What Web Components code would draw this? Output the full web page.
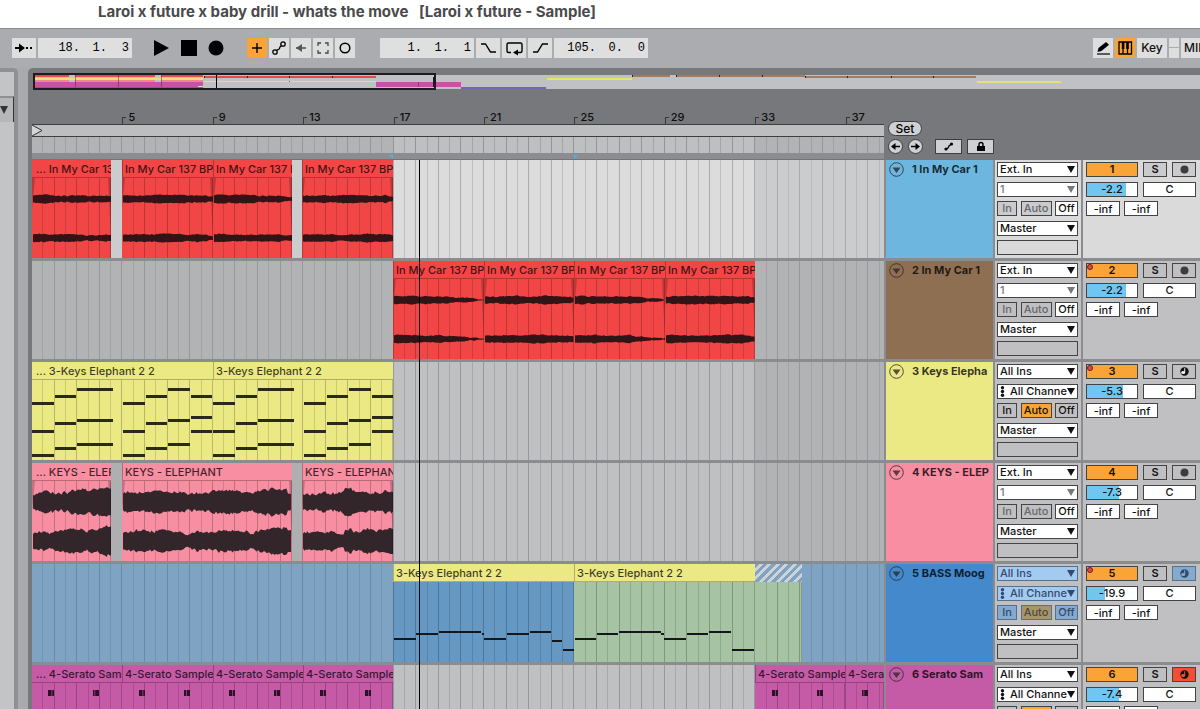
<!DOCTYPE html>
<html lang="en">
<head>
<meta charset="utf-8">
<title>Laroi x future x baby drill - whats the move</title>
<style>
html, body { margin: 0; height: 100%; overflow: hidden; background: #a9aaad; }
body { font: 500 11px/14px Inter, "Liberation Sans", sans-serif; color: #111; }
</style>
</head>
<body>
<daw-app></daw-app>
<script>
const BAR = 22.6;      // lane units per bar
const LANE = 852;      // lane units across the visible arrangement

const BASE = `
*, *::before { box-sizing: border-box; }
button, input, select { font: inherit; color: inherit; margin: 0; padding: 0; border: 0; border-radius: 0; appearance: none; outline: 0; min-width: 0; }
svg { display: block; }
`;

function define(name, css, render) {
  customElements.define(name, class extends HTMLElement {
    connectedCallback() {
      if (this.shadowRoot) return;
      const root = this.attachShadow({ mode: "open" });
      root.innerHTML = `<style>${BASE}${css}</style>${render(this)}`;
    }
  });
}

function gridLines(from, to, height, colour) {
  let s = "";
  for (let i = Math.ceil(from / (BAR / 2) + 0.05); i * BAR / 2 < to - 1; i++) {
    const x = Math.round(i * BAR / 2) - 1;
    s += `<rect x="${x}" width="1" height="${height}" fill="${colour}" opacity="${i % 2 ? 0.6 : 1}"/>`;
  }
  return s;
}

/* Deterministic waveform outline: an envelope with a little noise on both sides. */
function wave(from, to, centre, env, noise, seed) {
  let r = seed;
  const rnd = () => (r = (r * 16807) % 2147483647) / 2147483647;
  const top = [], bottom = [];
  let drift = 0;
  for (let x = from; x <= to; x += 1.5) {
    const t = (x - from) / (to - from);
    drift = drift * 0.7 + (rnd() - 0.5) * noise;
    const a = env(t, x - from) + drift;
    top.push(`${x.toFixed(1)} ${(centre - a - rnd() * noise * 0.4).toFixed(1)}`);
    bottom.unshift(`${x.toFixed(1)} ${(centre + a + rnd() * noise * 0.4).toFixed(1)}`);
  }
  return `<path d="M${top.join("L")}L${bottom.join("L")}Z"/>`;
}

const ENV = {
  fade: (t, x) => 4 - x / 90 * 1.8,
  tail: (t, x) => (t < 0.6 ? 4 - t * 1.7 : 3 * (1 - t) / 0.4 + 0.2),
  full: (t, x) => 3.6 - (t > 0.92 ? (t - 0.92) * 20 : 0),
  keysA: t => 8 + t * 4.5,
  keysB: t => 9 + Math.sin(t * 14) * 1 + (t > 0.78 ? 3 : 0) - (t > 0.97 ? 4 : 0),
  keysC: t => 8.5 + t * 2 + (Math.abs(t - 0.5) < 0.04 ? 3 : 0)
};

const chordsA = [[0,22,22],[0,22,50],[0,22,74],[23,21,15],[23,21,42],[23,21,67],[45,36,8],[45,36,39],[45,36,63]];
const chordsB = [[0,22,22],[0,22,50],[0,22,74],[23,21,15],[23,21,42],[23,21,67],[45,22,8],[45,22,39],[45,22,63],[68,21,15],[68,21,36],[68,21,50]];
const shift = (notes, dx) => notes.map(([x, w, y]) => [x + dx, w, y]);
const keys = at => [...shift(chordsA, at), ...shift(chordsB, at + 91)];
const blocks = xs => xs.flatMap(([x, split]) => [[x, split, 7, 6], [x + split + 0.6, 5.4 - split, 7, 6]]);

const CAR = "In My Car 137 BPM", KEYS = "3-Keys Elephant 2 2", SER = "4-Serato Sample";
const RED = "#f24546", YEL = "#ebe984", PINK = "#f78ea2", MAG = "#c55aa7";

const TRACKS = [
  { n: 1, name: "1 In My Car 1", colour: "#6db6df", vol: -2.2, fill: 79, input: "ext", selected: true, arm: "dot", items: [
    { w: 79, t: "... " + CAR, c: RED, env: "fade" }, { w: 11, blank: "#cbccce" },
    { w: 91, t: CAR, c: RED, env: "full" }, { w: 79, t: CAR, c: RED, env: "fade" }, { w: 10, blank: "#cbccce" },
    { w: 91, t: CAR, c: RED, env: "full" }, { w: 491 } ] },
  { n: 2, name: "2 In My Car 1", colour: "#8f6f52", vol: -2.2, fill: 79, input: "ext", arm: "dot", auto: true, items: [
    { w: 361 }, { w: 91, t: CAR, c: RED, env: "tail", mark: true }, { w: 90, t: CAR, c: RED, env: "full" },
    { w: 91, t: CAR, c: RED, env: "tail" }, { w: 90, t: CAR, c: RED, env: "full" }, { w: 129 } ] },
  { n: 3, name: "3 Keys Elepha", colour: YEL, vol: -5.3, fill: 72, input: "midi", arm: "midi", auto: true, items: [
    { w: 181, t: "... " + KEYS, c: YEL, notes: keys(0) }, { w: 180, t: KEYS, c: YEL, notes: keys(181) }, { w: 491 } ] },
  { n: 4, name: "4 KEYS - ELEP", colour: PINK, vol: -7.3, fill: 65, input: "ext", arm: "dot", items: [
    { w: 79, t: "... KEYS - ELEPHANT", c: PINK, env: "keysA" }, { w: 11, blank: "#adafb1" },
    { w: 170, t: "KEYS - ELEPHANT", c: PINK, env: "keysB" }, { w: 10, blank: "#adafb1" },
    { w: 91, t: "KEYS - ELEPHANT", c: PINK, env: "keysC" }, { w: 491 } ] },
  { n: 5, name: "5 BASS Moog", colour: "#4489cb", vol: -19.9, fill: 37, input: "midi", tinted: true, arm: "midi", auto: true, items: [
    { w: 361 },
    { w: 181, t: KEYS, c: YEL, body: "#6598c3", thin: true, notes: [[1,22,56],[23,22,51],[46,42,49],[89,2,51],[91,22,56],[114,22,51],[137,21,49],[159,10,58],[170,11,67]].map(([x,w,y]) => [x + 361, w, y]) },
    { w: 181, t: KEYS, c: YEL, body: "#a6c3a4", thin: true, notes: [[1,21,56],[23,21,51],[45,42,49],[87,3,51],[90,22,56],[113,21,51],[135,22,49],[158,22,67]].map(([x,w,y]) => [x + 542, w, y]) },
    { w: 47, t: "", hatch: true, body: "#a6c3a4" }, { w: 82 } ] },
  { n: 6, name: "6 Serato Sam", colour: MAG, vol: -7.4, fill: 65, input: "midi", arm: "on", items: [
    { w: 90, t: "... " + SER, c: MAG, notes: blocks([[16, 3.6], [61, 1.6]]) }, { w: 91, t: SER, c: MAG, notes: blocks([[107, 3.6], [152, 2.4]]) },
    { w: 90, t: SER, c: MAG, notes: blocks([[197, 3], [242, 2.4]]) }, { w: 90, t: SER, c: MAG, notes: blocks([[288, 3], [333, 3]]) },
    { w: 362 }, { w: 90, t: SER, c: MAG, notes: blocks([[740, 3], [785, 2.4]]) }, { w: 39, t: SER, c: MAG, notes: blocks([[830, 1.6]]) } ] }
];

/* ---- title and toolbar ---- */
define("title-bar", `
:host { display: flex; height: 28px; flex: none; background: #fff; padding: 0 0 0 98px; }
h1 { margin: 0; font: 700 15px/23px Inter, sans-serif; color: #4a4a4c; white-space: pre; }
`, () => `<h1><slot></slot></h1>`);

define("position-field", `
:host { display: flex; width: 94px; height: 20px; background: #dfdfe0; padding: 0 3px 0 0; }
input { font: 12px/20px "Liberation Mono", monospace; background: none; text-align: right; color: #000; width: 27px; height: 20px; }
input:first-of-type { width: 42px; }
input:last-of-type { width: 22px; }
`, el => el.getAttribute("value").split(" ").map((v, i) =>
  `<input aria-label="${el.getAttribute("label")} ${i + 1}" value="${v}">`).join(""));

const ICONS = {
  follow: `<svg width="24" height="20"><path d="M3 10h7" stroke="#000" stroke-width="2"/><path d="M7 5.500 13 10l-6 4.500z"/><path d="M14 9h2v2h-2zM18 9h2v2h-2z"/></svg>`,
  play: `<svg width="16" height="20"><path d="M0 2 15 10 0 18z"/></svg>`,
  stop: `<svg width="16" height="20"><path d="M0 2h16v16H0z"/></svg>`,
  record: `<svg width="16" height="20"><circle cx="8" cy="10" r="7.500"/></svg>`,
  plus: `<svg width="20" height="20"><path d="M5 10h10M10 5v10" stroke="#000" stroke-width="1.400"/></svg>`,
  automation: `<svg width="20" height="20" fill="none" stroke="#000" stroke-width="1.300"><circle cx="6" cy="14" r="2.200"/><circle cx="14" cy="6" r="2.200"/><path d="M7.500 12.500c2-2 2.500-.5 3-2s0-1.500 2-3"/></svg>`,
  back: `<svg width="20" height="20"><path d="M5 10h10" stroke="#555" stroke-width="1.600"/><path d="M11 6 5 10l6 4z" fill="#555"/></svg>`,
  capture: `<svg width="20" height="20" fill="none" stroke="#444" stroke-width="1.300"><path d="M5 8V5h3M12 5h3v3M15 12v3h-3M8 15H5v-3"/></svg>`,
  ring: `<svg width="20" height="20"><circle cx="10" cy="10" r="4.800" fill="none" stroke="#000" stroke-width="1.500"/></svg>`,
  punchin: `<svg width="24" height="20" fill="none" stroke="#000" stroke-width="1.400"><path d="M5 6h4.500l5 8H20"/></svg>`,
  loop: `<svg width="24" height="20"><path d="M9 14.500H6.500Q5 14.500 5 13V6.500Q5 5 6.500 5h12Q20 5 20 6.500V13q0 1.500-1.500 1.500H15" fill="none" stroke="#000" stroke-width="1.400"/><path d="M11 14.500l5-3v6z"/></svg>`,
  punchout: `<svg width="24" height="20" fill="none" stroke="#000" stroke-width="1.400"><path d="M5 14h4.500l5-8H20"/></svg>`,
  pencil: `<svg width="20" height="20"><path d="M4 16h13" stroke="#000" stroke-width="1.200"/><path d="M4.500 14l1-4 7.500-6 3 2.800-7.500 6.200z"/></svg>`,
  piano: `<svg width="20" height="20"><path d="M4 4h12.500v12H4zM8 4v12M12.500 4v12" fill="none" stroke="#000" stroke-width="1.300"/><path d="M6.800 4h2.600v7H6.800zM11.200 4h2.600v7h-2.600z"/></svg>`
};

define("tool-bar", `
:host { display: flex; flex: none; height: 40px; align-items: center; padding: 0 0 2px 12px; background: #abacaf; border-top: 1px solid #8c8d8f; overflow: hidden; }
.group { display: flex; gap: 2px; flex: none; }
.transport { gap: 11px; margin: 0 23px 0 22px; }
.song { margin-left: 25px; }
.right { margin-left: auto; width: 107px; overflow: hidden; }
button { width: 20px; height: 20px; flex: none; background: #dedede; font-size: 12px; line-height: 20px; color: #111; }
.wide { width: 24px; }
.transport button { width: 16px; background: none; }
.on { background: #faa438; }
.key { width: 30px; }
.midi { width: 42px; padding-left: 3px; text-align: left; }
.leds { display: grid; gap: 1px; width: 10px; flex: none; }
.leds i { background: #dedede; }
`, () => `
<div class="group"><button class="wide" aria-label="Follow">${ICONS.follow}</button><position-field label="Position" value="18. 1. 3"></position-field></div>
<div class="group transport"><button aria-label="Play">${ICONS.play}</button><button aria-label="Stop">${ICONS.stop}</button><button aria-label="Record">${ICONS.record}</button></div>
<div class="group"><button class="on" aria-label="Overdub">${ICONS.plus}</button><button aria-label="Automation arm">${ICONS.automation}</button><button aria-label="Re-enable automation">${ICONS.back}</button><button aria-label="Capture">${ICONS.capture}</button><button aria-label="Session record">${ICONS.ring}</button></div>
<div class="group song"><position-field label="Loop start" value="1. 1. 1"></position-field><button class="wide" aria-label="Punch in">${ICONS.punchin}</button><button class="wide" aria-label="Loop">${ICONS.loop}</button><button class="wide" aria-label="Punch out">${ICONS.punchout}</button><position-field label="Loop length" value="105. 0. 0"></position-field></div>
<div class="group right"><button aria-label="Draw">${ICONS.pencil}</button><button class="on" aria-label="Computer keyboard">${ICONS.piano}</button><button class="key">Key</button><span class="leds"><i></i><i></i></span><button class="midi">MIDI</button></div>`);

/* ---- browser edge ---- */
define("side-edge", `
:host { display: flex; flex-direction: column; flex: none; width: 18px; margin-right: 10px; border: solid #8f9093; border-width: 4px 4px 0 0; border-radius: 0 5px 0 0; background: #c3c4c5; }
button { height: 26px; margin-top: 24px; background: #b6b7b9; border: solid #8f9093; border-width: 2px 0 0; border-right: 1px solid #333; }
`, () => `<button aria-label="Collapse"><svg width="13" height="24"><path d="M0 8h8l-4 8z" fill="#333"/></svg></button>`);

/* ---- overview ---- */
define("song-overview", `
:host { display: block; height: 18px; }
svg { width: 100%; height: 18px; }
`, () => {
  const r = (x, x2, y, h, c) => `<rect x="${x - 32}" y="${y}" width="${x2 - x}" height="${h}" fill="${c}"/>`;
  const red = "#e8484c", mag = "#c852a8", dark = "#33211c", brown = "#a07c64";
  return `<svg viewBox="0 0 1168 18" preserveAspectRatio="none" role="img" aria-label="Overview" shape-rendering="crispEdges">
  ${r(33, 1200, 2, 14, "#c0c1c3")}
  ${r(35, 69, 2, 2, red)}${r(75, 155, 2, 2, red)}${r(161, 203, 2, 2, red)}
  ${r(35, 203, 4, 1, "#d8c4b4")}${r(35, 203, 5, 2, "#e6e07c")}${r(35, 203, 7, 2, "#f0868f")}${r(69, 75, 7, 2, "#c0c1c3")}${r(155, 161, 7, 2, "#c0c1c3")}
  ${r(35, 203, 9, 5, mag)}${r(35, 203, 14, 1, "#6c63ae")}${r(198, 203, 13, 1, "#ddd")}
  ${[75, 118, 161].map(x => r(x, x + 1, 2, 12, "rgba(90,30,60,.5)")).join("")}
  ${r(204, 376, 3, 2, red)}${[204, 247, 289, 332].map(x => r(x, x + 1, 3, 2, dark)).join("")}${r(204, 376, 8, 1, "#e6e07c")}${r(289, 290, 8, 1, "#666655")}
  ${r(376, 461, 9, 5, mag)}${r(418, 419, 9, 5, "#a03888")}${r(461, 546, 14, 2, "#6f68ae")}
  ${r(547, 632, 5, 2, "#e9e263")}${r(632, 670, 2, 2, brown)}${r(676, 805, 2, 2, brown)}${r(805, 976, 3, 2, brown)}
  ${[632, 676, 719, 762].map(x => r(x, x + 1, 2, 2, dark)).join("")}${[805, 847, 891, 933].map(x => r(x, x + 1, 3, 2, dark)).join("")}
  ${r(977, 1061, 8, 2, "#e6e07c")}
  ${r(216, 217, 1, 16, "#000")}
  <rect x="2" y="1" width="401" height="15" fill="none" stroke="#1c1c1e" stroke-width="2"/>${r(433, 435, 4, 10, "#1c1c1e")}
  </svg>`;
});

/* ---- ruler ---- */
define("time-ruler", `
:host { display: flex; height: 69px; }
.time { flex: 1; min-width: 0; display: flex; flex-direction: column; }
.labels { display: flex; height: 33px; align-items: flex-end; background: #77787b; overflow: hidden; }
.labels span { flex: 904 0 0; min-width: 0; display: flex; align-items: flex-end; gap: 2px; line-height: 14px; color: #0d0d0e; }
.labels span:last-child { flex-grow: 384; }
.labels i { width: 4px; height: 7px; border: solid #37383a; border-width: 1px 0 0 1px; }
.loop { height: 13px; background: #bdbec0; border: solid #3d3e40; border-width: 1px 0; }
.scrub { height: 16px; }
.scrub svg { width: 100%; height: 16px; }
.gap { height: 7px; background: #8c8d90; border-bottom: 1px solid #7d6f74; }
.gap svg { width: 100%; height: 6px; }
.side { flex: none; width: 316px; padding: 0 0 6px 4px; display: flex; flex-direction: column; justify-content: flex-end; gap: 3px; }
.row { display: flex; gap: 5px; }
button { background: #cfd0d1; border: 1px solid #3c3d3f; height: 15px; line-height: 12px; font-size: 12px; display: grid; place-items: center; color: #000; }
.set { width: 34px; border-radius: 8px; }
.round { width: 15px; border-radius: 8px; }
.sq { width: 27px; }
.sq.first { margin-left: 7px; }
`, () => {
  const labels = ["", 5, 9, 13, 17, 21, 25, 29, 33, 37];
  return `<div class="time">
  <div class="labels">${labels.map(l => `<span>${l ? `<i></i>${l}` : ""}</span>`).join("")}</div>
  <div class="loop"><svg width="12" height="11"><path d="M0 0l10 5.500L0 11" fill="#d5d5d6" stroke="#333"/></svg></div>
  <div class="scrub"><svg viewBox="0 0 ${LANE} 16" preserveAspectRatio="none" shape-rendering="crispEdges"><rect width="${LANE}" height="16" fill="#b2b3b5"/><rect x="361" width="362" height="16" fill="#bebfc0"/>${gridLines(0, LANE, 16, "#939598")}</svg></div>
  <div class="gap"><svg viewBox="0 0 ${LANE} 6" preserveAspectRatio="none" fill="#45b4ea"><path d="M357 2h4v4zM542 2h4l-4 4z"/></svg></div>
  </div>
  <div class="side"><div class="row"><button class="set">Set</button></div>
  <div class="row"><button class="round" aria-label="Previous locator"><svg width="13" height="13"><path d="M5 6.500h6" stroke="#000" stroke-width="1.600"/><path d="M6.500 3 2 6.500 6.500 10z"/></svg></button>
  <button class="round" aria-label="Next locator"><svg width="13" height="13"><path d="M2 6.500h6" stroke="#000" stroke-width="1.600"/><path d="M6.500 3 11 6.500 6.500 10z"/></svg></button>
  <button class="sq first" aria-label="Automation mode"><svg width="13" height="13"><circle cx="4" cy="9" r="1.600"/><circle cx="9.500" cy="4" r="1.600"/><path d="M4 9l2-1 1-2 2.500-2" fill="none" stroke="#000" stroke-width="1.300"/></svg></button>
  <button class="sq" aria-label="Lock envelopes"><svg width="13" height="13"><path d="M3 6h8v5H3z"/><path d="M5 6V4.500a2 2 0 0 1 4 0V6" fill="none" stroke="#000" stroke-width="1.400"/></svg></button></div></div>`;
});

/* ---- clips ---- */
define("track-clip", `
:host { display: flex; flex-direction: column; min-width: 0; overflow: hidden; }
header { flex: none; height: 18px; padding: 2px 0 0 3px; font-weight: 500; line-height: 15px; white-space: nowrap; overflow: hidden; color: rgba(0,0,0,.75); border: solid rgba(0,0,0,.25); border-width: 0 0 1px; background: var(--c); }
:host([edge]) header { border-left-width: 1px; padding-left: 2px; }
.dots { padding-left: 4px; }
header.hatch { border: 0; background: repeating-linear-gradient(135deg, #7fa3c3 0 3px, #cfd3d6 3px 6px); }
svg { width: 100%; height: 80px; flex: none; background: var(--b); }
`, el => {
  const d = el.item, s = el.start, e = s + d.w;
  let art = gridLines(s, e, 80, "rgba(0,0,0,.22)");
  if (d.env) {
    const big = d.env.startsWith("keys");
    art += `<path d="M${s} 0h3L${s} 30zM${e} 0h-3L${e} 60z" fill="rgba(0,0,0,.2)" shape-rendering="auto"/>`;
    art += `<g fill="${big ? "#33262a" : "#301416"}" shape-rendering="auto">${[21, 60].map((c, i) => wave(s + 1, e, c, ENV[d.env], big ? 3 : 1, 977 + s * 31 + i * 5555)).join("")}</g>`;
  }
  if (d.mark) art += `<path d="M387 16h1v10h-1zM387 55h1v10h-1z" fill="#fff"/>`;
  for (const [x, w, y, h] of d.notes || [])
    art += `<rect x="${x}" y="${y}" width="${w}" height="${h || (d.thin ? 2 : 3)}" fill="${h ? "#2b1226" : d.thin ? "#14171a" : "#2a2a1a"}" ${h ? 'shape-rendering="auto"' : ""}/>`;
  art += `<rect x="${e - 1}" width="1" height="80" fill="rgba(0,0,0,.2)"/>`;
  return `<style>:host{--c:${d.c};--b:${d.body || d.c}}</style>
  <header class="${d.hatch ? "hatch" : d.t.startsWith("...") ? "dots" : ""}">${d.t}</header>
  <svg viewBox="${s} 0 ${d.w} 80" preserveAspectRatio="none" shape-rendering="crispEdges">${art}</svg>`;
});

define("clip-lane", `
:host { display: grid; min-width: 0; overflow: hidden; }
.grid, .clips { grid-area: 1 / 1; min-width: 0; }
.grid { width: 100%; height: 98px; }
.clips { display: flex; height: 98px; }
`, () => "");
customElements.get("clip-lane").prototype.fill = function (t) {
  const root = this.shadowRoot;
  const base = t.selected ? ["#cbccce", "#dcdcdd"] : t.tinted ? ["#7fa3c3", "#7fa3c3"] : ["#b1b3b5", "#bfc0c2"];
  const line = t.tinted ? "#6a89a5" : t.selected ? "#a9abae" : "#95989c";
  root.innerHTML += `<svg class="grid" viewBox="0 0 ${LANE} 98" preserveAspectRatio="none" shape-rendering="crispEdges">
    <rect width="${LANE}" height="98" fill="${base[0]}"/><rect x="361" width="362" height="98" fill="${base[1]}"/>${gridLines(0, LANE, 98, line)}</svg><div class="clips"></div>`;
  const clips = root.querySelector(".clips");
  let x = 0;
  for (const it of t.items) {
    const node = document.createElement(it.t === undefined ? "div" : "track-clip");
    node.style.flex = `${it.w} 0 0`;
    if (it.blank) node.style.background = it.blank;
    node.item = it; node.start = x;
    if (x && it.t !== undefined) node.setAttribute("edge", "");
    clips.append(node);
    x += it.w;
  }
};

/* ---- track controls ---- */
define("track-name", `
:host { display: flex; gap: 8px; padding: 2px 0 0 3px; overflow: hidden; color: rgba(0,0,0,.78); }
button { background: none; width: 15px; height: 15px; flex: none; }
b { font-weight: 700; line-height: 15px; white-space: nowrap; }
`, () => `<button aria-label="Fold track"><svg width="15" height="15"><circle cx="7.500" cy="7.500" r="6.800" fill="none" stroke="#2b2b2b" stroke-opacity=".8"/><path d="M3.500 5.500h8l-4 5.500z" fill="#2b2b2b" fill-opacity=".8"/></svg></button><b><slot></slot></b>`);

define("pick-list", `
:host { display: grid; height: 15px; align-items: center; color: #111; --line: #434446; }
select { grid-area: 1 / 1; width: 100%; height: 15px; border: 1px solid var(--line); background: #fff; padding: 0 10px 0 2px; line-height: 13px; white-space: nowrap; }
svg { grid-area: 1 / 1; pointer-events: none; z-index: 1; }
.arrow { justify-self: end; margin-right: 3px; }
.chan { margin-left: 3px; }
:host([channels]) select { padding-left: 12px; }
:host([dim]) { color: #77787a; }
:host([tint]) { color: #35496a; --line: #55718f; }
:host([tint]) select { background: #a3cbf2; }
`, el => `<select aria-label="${el.getAttribute("label")}"><option>${el.getAttribute("value")}</option></select>
${el.hasAttribute("channels") ? `<svg class="chan" width="6" height="11" fill="currentColor"><circle cx="2.500" cy="1.700" r="1.700"/><circle cx="2.500" cy="5.500" r="1.700"/><circle cx="2.500" cy="9.300" r="1.700"/></svg>` : ""}
<svg class="arrow" width="8" height="7"><path d="M0 0h8L4 7z" fill="currentColor"/></svg>`);

define("track-io", `
:host { display: flex; flex-direction: column; justify-content: space-between; padding: 2px 3px 3px 2px; background: var(--panel); }
.mon { display: grid; grid-template-columns: 20px 31px 23px; justify-content: space-between; height: 15px; }
button { height: 15px; border: 1px solid #434446; background: var(--off); line-height: 13px; color: #111; white-space: nowrap; }
button.dim { color: #66676a; }
.white { background: #fff; }
.on { background: #faa438; }
.tint button { background: #84aacf; border-color: #55718f; color: #35496a; }
.tint .on { background: #a8966a; color: #4f4a3c; }
.blank { height: 15px; border: 1px solid #434446; }
`, el => {
  const t = el.track, ext = t.input === "ext", tint = t.tinted ? "tint" : "";
  return `<pick-list label="Input type" value="${ext ? "Ext. In" : "All Ins"}" ${tint}></pick-list>
  <pick-list label="Input channel" value="${ext ? "1" : "All Channels"}" ${ext ? "dim" : "channels"} ${tint}></pick-list>
  <div class="mon ${tint}"><button class="${ext ? "dim" : ""}">In</button><button class="${ext ? "dim" : "on"}">Auto</button><button class="${ext ? "white" : ""}">Off</button></div>
  <pick-list label="Output" value="Master"></pick-list><div class="blank"></div>`;
});

define("track-mixer", `
:host { display: flex; flex-direction: column; padding: 2px 0 0 3px; background: var(--panel); overflow: hidden; }
.grid { display: flex; flex-direction: column; height: 54px; justify-content: space-between; width: 110px; }
.row { display: grid; height: 15px; justify-content: space-between; }
.a { grid-template-columns: 52px 24px 24px; }
.b { grid-template-columns: 52px 53px; }
.c { grid-template-columns: 34px 34px; justify-content: start; gap: 4px; }
button, input { width: 100%; height: 15px; border: 1px solid #434446; background: #fff; text-align: center; line-height: 13px; color: #111; }
button { background: var(--off); display: grid; place-items: center; position: relative; font-weight: 600; }
button.num { background: #faa438; }
.num svg { position: absolute; left: 0; top: 0; }
input.vol { background: linear-gradient(to right, #6ec6f1 var(--fill), #fff 0); }
button.tint { background: #84aacf; border-color: #55718f; color: #35496a; }
button.armed { background: #f4502f; }
`, el => {
  const t = el.track;
  const arm = t.arm === "dot" ? `<svg width="13" height="13"><circle cx="6.500" cy="6.500" r="4" fill="#3c3d3f"/></svg>`
    : `<svg width="13" height="13"><circle cx="6.500" cy="6.500" r="4.200" fill="currentColor"/><path d="M6.200 3.200h1v4.300a2 1.500 0 1 1-1-1.300z" fill="${t.tinted ? "#84aacf" : t.arm === "on" ? "#f4502f" : "#eeeeee"}"/></svg>`;
  return `<div class="grid"><div class="row a"><button class="num">${t.n}${t.auto ? `<svg width="7" height="7"><circle cx="3" cy="3" r="2.500" fill="#e8474a" stroke="#6b1f1c"/></svg>` : ""}</button><button>S</button><button class="${t.tinted ? "tint" : t.arm === "on" ? "armed" : ""}" aria-label="Arm">${arm}</button></div>
  <div class="row b"><input class="vol" aria-label="Volume" style="--fill:${t.fill}%" value="${t.vol}"><input aria-label="Pan" value="C"></div>
  <div class="row c"><input aria-label="Send A" value="-inf"><input aria-label="Send B" value="-inf"></div></div>`;
});

define("track-row", `
:host { display: grid; grid-template-columns: minmax(0, 1fr) 107px 86px 117px; column-gap: 2px; height: 98px; flex: none; --panel: #c0c0c2; --off: #c0c0c2; }
:host([selected]) { --panel: #dadadb; --off: #cbcbcd; }
`, () => "");
customElements.get("track-row").prototype.fill = function (t) {
  if (t.selected) this.setAttribute("selected", "");
  const make = name => Object.assign(document.createElement(name), { track: t });
  const lane = make("clip-lane"), name = make("track-name");
  name.textContent = t.name;
  name.style.background = t.colour;
  this.shadowRoot.append(lane, name, make("track-io"), make("track-mixer"));
  lane.fill(t);
};

define("arrangement-view", `
:host { display: flex; flex-direction: column; flex: 1; min-width: 0; padding: 5px 0 0 4px; background: #77787b; border-radius: 5px 0 0 0; overflow: hidden; }
.tracks { position: relative; display: flex; flex-direction: column; gap: 3px; background: #8b8c8f; flex: none; }
.head { position: absolute; inset: 0 316px 0 0; pointer-events: none; }
.head i { display: block; width: 1px; height: 100%; margin-left: 45.430%; background: #000; }
`, () => `<song-overview></song-overview><time-ruler></time-ruler><div class="tracks"><div class="head"><i></i></div></div>`);

define("daw-app", `
:host { display: flex; flex-direction: column; height: 100vh; overflow: hidden; }
main { flex: 1; min-height: 0; display: flex; }
`, () => `<title-bar>Laroi x future x baby drill - whats the move   [Laroi x future - Sample]</title-bar><tool-bar></tool-bar><main><side-edge></side-edge><arrangement-view></arrangement-view></main>`);

const view = document.querySelector("daw-app").shadowRoot.querySelector("arrangement-view");
const tracks = view.shadowRoot.querySelector(".tracks");
const playhead = tracks.querySelector(".head");
for (const t of TRACKS) {
  const row = document.createElement("track-row");
  tracks.insertBefore(row, playhead);
  row.fill(t);
}
</script>
</body>
</html>
